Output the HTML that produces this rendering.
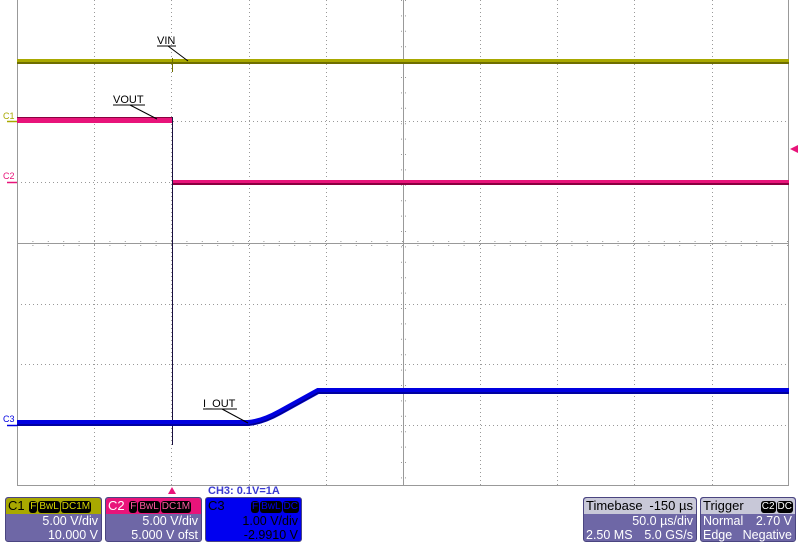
<!DOCTYPE html>
<html><head><meta charset="utf-8"><style>
body{margin:0;width:800px;height:544px;background:#fff;position:relative;overflow:hidden;font-family:"Liberation Sans",sans-serif}
.p{position:absolute;top:497px;height:45px;background:#6e67a6;border-radius:3px;border:1px solid #4a4580;box-sizing:border-box;color:#fff;font-size:12.5px;line-height:14px}
.h{height:16px;border-radius:3px 3px 0 0;font-size:13px;line-height:16px;padding-left:2px;position:relative}
.r{text-align:right;padding-right:3px}
.tag{display:inline-block;background:#000;border-radius:3px;font-size:10px;line-height:12px;padding:0 1px;margin-left:1px;vertical-align:1px}
</style></head><body>
<svg width="800" height="544" style="position:absolute;left:0;top:0">
<g stroke="#999" stroke-width="1" stroke-dasharray="1,3">
<line x1="94.5" y1="0" x2="94.5" y2="486"/><line x1="171.5" y1="0" x2="171.5" y2="486"/><line x1="249.5" y1="0" x2="249.5" y2="486"/><line x1="326.5" y1="0" x2="326.5" y2="486"/><line x1="480.5" y1="0" x2="480.5" y2="486"/><line x1="557.5" y1="0" x2="557.5" y2="486"/><line x1="634.5" y1="0" x2="634.5" y2="486"/><line x1="712.5" y1="0" x2="712.5" y2="486"/>
<line x1="17" y1="61.5" x2="789" y2="61.5"/><line x1="17" y1="121.5" x2="789" y2="121.5"/><line x1="17" y1="182.5" x2="789" y2="182.5"/><line x1="17" y1="304.5" x2="789" y2="304.5"/><line x1="17" y1="364.5" x2="789" y2="364.5"/><line x1="17" y1="425.5" x2="789" y2="425.5"/>
</g>
<g stroke="#999" stroke-width="1" stroke-dasharray="1,14.4">
<line x1="17" y1="241.5" x2="789" y2="241.5"/><line x1="17" y1="245.5" x2="789" y2="245.5"/>
<line x1="401.5" y1="0" x2="401.5" y2="486"/><line x1="405.5" y1="0" x2="405.5" y2="486"/>
</g>
<g stroke="#999" stroke-width="1" fill="none">
<line x1="17.5" y1="0" x2="17.5" y2="486"/><line x1="788.5" y1="0" x2="788.5" y2="486"/><line x1="17" y1="485.5" x2="789" y2="485.5"/>
<line x1="17" y1="243.5" x2="789" y2="243.5"/><line x1="403.5" y1="0" x2="403.5" y2="486"/>
</g>
<!-- VIN -->
<rect x="17" y="59" width="772" height="4" fill="#a8a800"/>
<rect x="17" y="62" width="772" height="2" fill="#6e6e00"/>
<line x1="172.5" y1="58" x2="172.5" y2="72" stroke="#6e6e00"/>
<!-- VOUT -->
<rect x="17" y="117" width="155" height="6" fill="#e8147a"/>
<rect x="17" y="117" width="155" height="1" fill="#8a0040"/>
<rect x="172" y="180" width="617" height="4" fill="#e8147a"/>
<rect x="172" y="183" width="617" height="2" fill="#8a0040"/>
<line x1="172.5" y1="117" x2="172.5" y2="445" stroke="#1a1040"/>
<!-- IOUT -->
<path d="M17 423 L248 423 Q262 422 280 412 L318 391 L789 391" stroke="#0000e0" stroke-width="6" fill="none"/>
<path d="M17 425 L248 425 Q262 424 280 414 L318 393 L789 393" stroke="#00008a" stroke-width="1.5" fill="none"/>
<!-- labels -->
<g font-family="Liberation Sans" font-size="11" fill="#000">
<text x="157" y="44">VIN</text><line x1="157" y1="46" x2="176" y2="46" stroke="#000"/><line x1="168" y1="46" x2="188" y2="61" stroke="#000"/>
<text x="113" y="103">VOUT</text><line x1="113" y1="105" x2="145" y2="105" stroke="#000"/><line x1="130" y1="105" x2="157" y2="119" stroke="#000"/>
<text x="203" y="407">I_OUT</text><line x1="203" y1="409" x2="237" y2="409" stroke="#000"/><line x1="222" y1="409" x2="248" y2="423" stroke="#000"/>
</g>
<text x="3" y="119" font-size="9" fill="#a8a800" font-family="Liberation Sans">C1</text><line x1="7" y1="121.5" x2="17" y2="121.5" stroke="#a8a800" stroke-width="1.5"/>
<text x="3" y="179" font-size="9" fill="#e8147a" font-family="Liberation Sans">C2</text><line x1="7" y1="182.5" x2="17" y2="182.5" stroke="#e8147a" stroke-width="1.5"/>
<text x="3" y="422" font-size="9" fill="#0000e0" font-family="Liberation Sans">C3</text><line x1="7" y1="425.5" x2="17" y2="425.5" stroke="#0000e0" stroke-width="1.5"/>
<polygon points="790,149 798,145 798,153" fill="#e8147a"/>
<polygon points="168,494 172,487 176,494" fill="#e8147a"/>
<text x="208" y="494" font-size="11" font-weight="bold" fill="#3a3ad0" font-family="Liberation Sans">CH3: 0.1V=1A</text>
</svg>
<div class="p" style="left:5px;width:97px"><div class="h" style="background:#a8a800;color:#000">C1 <span class="tag" style="color:#d8d800">F</span><span class="tag" style="color:#d8d800">BwL</span><span class="tag" style="color:#d8d800">DC1M</span></div><div class="r">5.00 V/div</div><div class="r">10.000 V</div></div>
<div class="p" style="left:105px;width:97px"><div class="h" style="background:#e8147a;color:#fff">C2 <span class="tag" style="color:#ff5aa0">F</span><span class="tag" style="color:#ff5aa0">BwL</span><span class="tag" style="color:#ff5aa0">DC1M</span></div><div class="r">5.00 V/div</div><div class="r">5.000 V ofst</div></div>
<div class="p" style="left:205px;width:97px;background:#0000f0;color:#000"><div class="h" style="color:#000">C3 <span style="position:absolute;right:2px"><span class="tag" style="color:#0000f0">F</span><span class="tag" style="color:#0000f0">BwL</span><span class="tag" style="color:#0000f0">DC</span></span></div><div class="r">1.00 V/div</div><div class="r">-2.9910 V</div></div>
<div class="p" style="left:583px;width:114px"><div class="h" style="background:#c8c8d8;color:#000">Timebase<span style="position:absolute;right:3px">-150 µs</span></div><div class="r">50.0 µs/div</div><div style="padding-left:2px">2.50 MS<span style="float:right;padding-right:3px">5.0 GS/s</span></div></div>
<div class="p" style="left:700px;width:96px"><div class="h" style="background:#c8c8d8;color:#000">Trigger<span style="position:absolute;right:2px"><span class="tag" style="color:#fff">C2</span><span class="tag" style="color:#fff">DC</span></span></div><div style="padding-left:2px">Normal<span style="float:right;padding-right:3px">2.70 V</span></div><div style="padding-left:2px">Edge<span style="float:right;padding-right:3px">Negative</span></div></div>
</body></html>
